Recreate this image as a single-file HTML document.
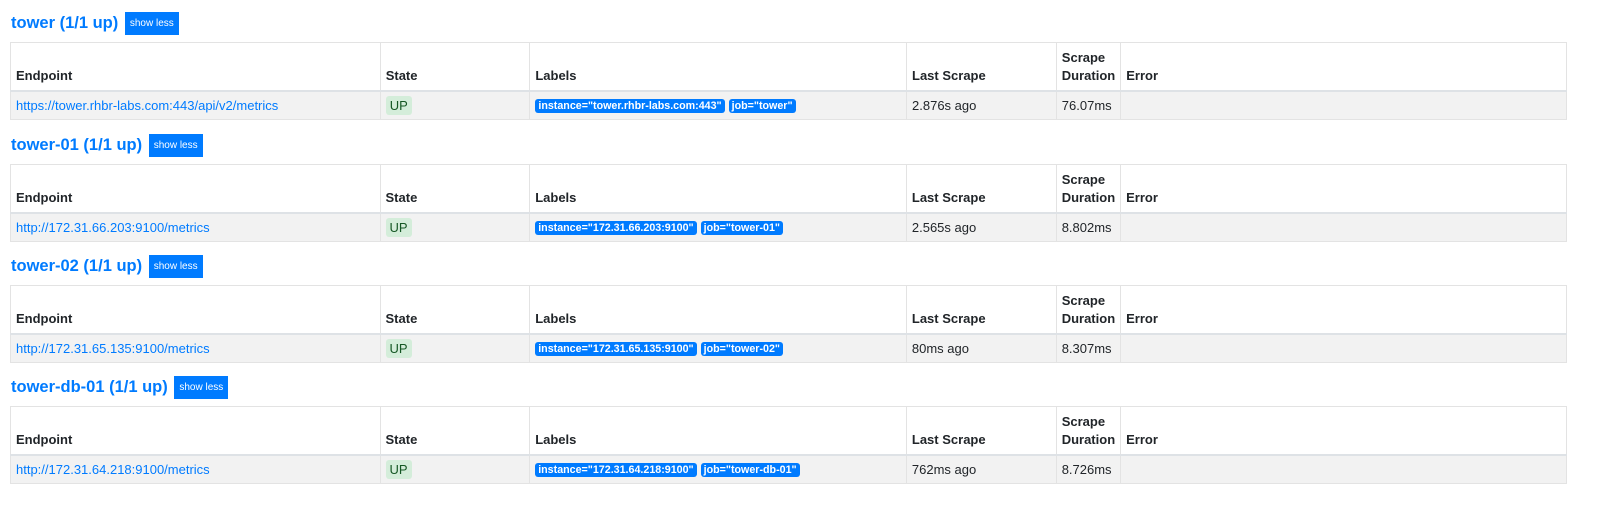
<!DOCTYPE html>
<html><head><meta charset="utf-8"><style>
html,body{margin:0;padding:0}
body{background:#fff;font-family:"Liberation Sans",Arial,sans-serif;color:#212529;width:1600px;height:520px;overflow:hidden;position:relative}
.sec{position:absolute;left:0;right:0;height:121px}
.h{position:absolute;left:11px;top:12px;font-size:16.5px;font-weight:bold;color:#007bff;line-height:22px;white-space:nowrap}
.btn{display:inline-block;background:#007bff;color:#fff;font-size:10px;font-weight:normal;padding:0 5px;line-height:23px;height:23px;vertical-align:top;margin-left:2px}
table{position:absolute;left:10px;right:33px;top:42px;border-collapse:collapse;table-layout:fixed;min-width:1557px;font-size:13px}
th,td{box-sizing:border-box;border:1px solid #e3e3e3;padding:0 5px;text-align:left;white-space:nowrap;overflow:hidden}
th{height:48px;vertical-align:bottom;padding-bottom:5px;font-weight:bold;line-height:18px;border-bottom:2px solid #dee2e6}
td{height:29px;background:#f2f2f2}
a{color:#007bff;text-decoration:none}
.up{display:inline-block;background:#d4edda;color:#155724;border-radius:3px;padding:0 4px;line-height:19px;font-size:13px}
.lb{display:inline-block;background:#007bff;color:#fff;border-radius:3px;padding:0 3px;font-size:10.7px;font-weight:bold;line-height:14px;margin-right:4px;vertical-align:middle}
</style></head><body>

<div class="sec" style="top:0">
<div class="h">tower (1/1 up) <span class="btn">show less</span></div>
<table><colgroup><col style="width:370px"><col style="width:150px"><col style="width:377px"><col style="width:150px"><col style="width:63px"><col style="width:447px"></colgroup>
<tr><th>Endpoint</th><th>State</th><th>Labels</th><th>Last Scrape</th><th>Scrape<br>Duration</th><th>Error</th></tr>
<tr><td><a>https://tower.rhbr-labs.com:443/api/v2/metrics</a></td><td><span class="up">UP</span></td><td><span class="lb">instance="tower.rhbr-labs.com:443"</span><span class="lb">job="tower"</span></td><td>2.876s ago</td><td>76.07ms</td><td></td></tr></table>
</div>

<div class="sec" style="top:122px">
<div class="h">tower-01 (1/1 up) <span class="btn">show less</span></div>
<table><colgroup><col style="width:370px"><col style="width:150px"><col style="width:377px"><col style="width:150px"><col style="width:63px"><col style="width:447px"></colgroup>
<tr><th>Endpoint</th><th>State</th><th>Labels</th><th>Last Scrape</th><th>Scrape<br>Duration</th><th>Error</th></tr>
<tr><td><a>http://172.31.66.203:9100/metrics</a></td><td><span class="up">UP</span></td><td><span class="lb">instance="172.31.66.203:9100"</span><span class="lb">job="tower-01"</span></td><td>2.565s ago</td><td>8.802ms</td><td></td></tr></table>
</div>

<div class="sec" style="top:243px">
<div class="h">tower-02 (1/1 up) <span class="btn">show less</span></div>
<table><colgroup><col style="width:370px"><col style="width:150px"><col style="width:377px"><col style="width:150px"><col style="width:63px"><col style="width:447px"></colgroup>
<tr><th>Endpoint</th><th>State</th><th>Labels</th><th>Last Scrape</th><th>Scrape<br>Duration</th><th>Error</th></tr>
<tr><td><a>http://172.31.65.135:9100/metrics</a></td><td><span class="up">UP</span></td><td><span class="lb">instance="172.31.65.135:9100"</span><span class="lb">job="tower-02"</span></td><td>80ms ago</td><td>8.307ms</td><td></td></tr></table>
</div>

<div class="sec" style="top:364px">
<div class="h">tower-db-01 (1/1 up) <span class="btn">show less</span></div>
<table><colgroup><col style="width:370px"><col style="width:150px"><col style="width:377px"><col style="width:150px"><col style="width:63px"><col style="width:447px"></colgroup>
<tr><th>Endpoint</th><th>State</th><th>Labels</th><th>Last Scrape</th><th>Scrape<br>Duration</th><th>Error</th></tr>
<tr><td><a>http://172.31.64.218:9100/metrics</a></td><td><span class="up">UP</span></td><td><span class="lb">instance="172.31.64.218:9100"</span><span class="lb">job="tower-db-01"</span></td><td>762ms ago</td><td>8.726ms</td><td></td></tr></table>
</div>

</body></html>
